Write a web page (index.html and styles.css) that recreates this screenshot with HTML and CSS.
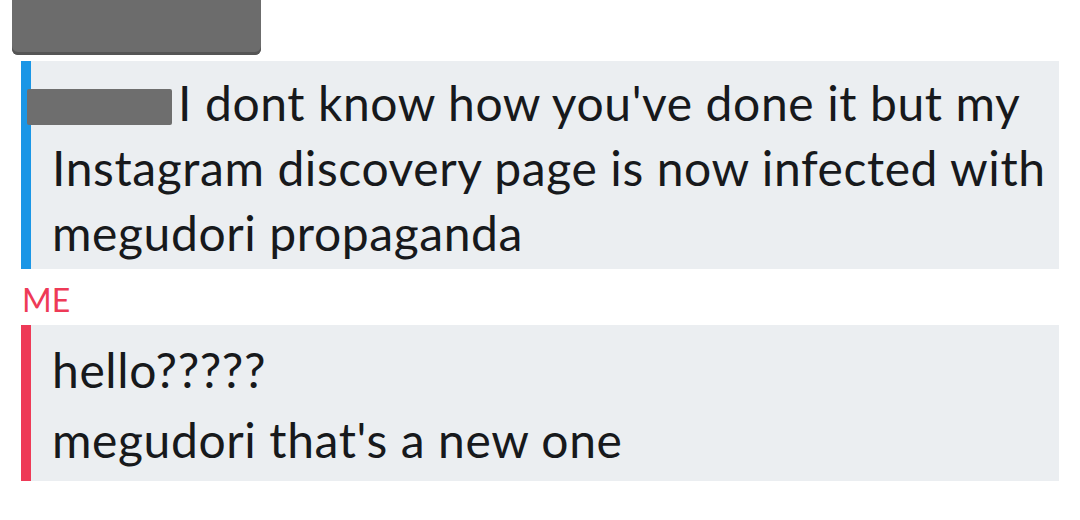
FILE: index.html
```html
<!DOCTYPE html>
<html>
<head>
<meta charset="utf-8">
<link rel="stylesheet" href="styles.css">
</head>
<body>
<div class="page">
  <div class="top-redact"></div>
  <div class="msg msg-them">
    <p class="line"><span class="name-redact"></span>I dont know how you've done it but my Instagram discovery page is now infected with megudori propaganda</p>
  </div>
  <div class="sender">ME</div>
  <div class="msg msg-me">
    <p class="line single">hello?????</p>
    <p class="line single">megudori that's a new one</p>
  </div>
</div>
</body>
</html>
```
FILE: styles.css
```css
html, body {
  margin: 0;
  padding: 0;
  background: #ffffff;
}
.page {
  width: 1080px;
  height: 520px;
  overflow: hidden;
  font-family: "Lato", "Open Sans", sans-serif;
  color: #17191c;
}
.top-redact {
  margin-left: 12px;
  width: 249px;
  height: 55px;
  background: #6c6c6c;
  border-radius: 0 0 6px 6px;
  box-shadow: inset 0 -3px 0 #555555;
}
.msg {
  margin: 6px 0 0 21px;
  width: 1038px;
  background: #ebeef1;
  border-left: 10px solid #1a96e6;
  box-sizing: border-box;
}
.msg-them {
  padding: 9px 10px 10px 21px;
  height: 208px;
}
.msg-me {
  margin-top: 10px;
  border-left-color: #ee3a57;
  padding: 10px 10px 6px 21px;
  height: 156px;
}
.line {
  margin: 0;
  font-size: 48px;
  line-height: 65px;
  letter-spacing: 0.6px;
}
.single {
  line-height: 70px;
}
.name-redact {
  display: inline-block;
  width: 145px;
  height: 36px;
  background: #6e6e6e;
  border-radius: 2px;
  margin-left: -25px;
  margin-right: 6px;
  vertical-align: -4px;
}
.sender {
  margin: 16px 0 0 22px;
  color: #ee3a57;
  font-size: 32px;
  line-height: 30px;
}
```
